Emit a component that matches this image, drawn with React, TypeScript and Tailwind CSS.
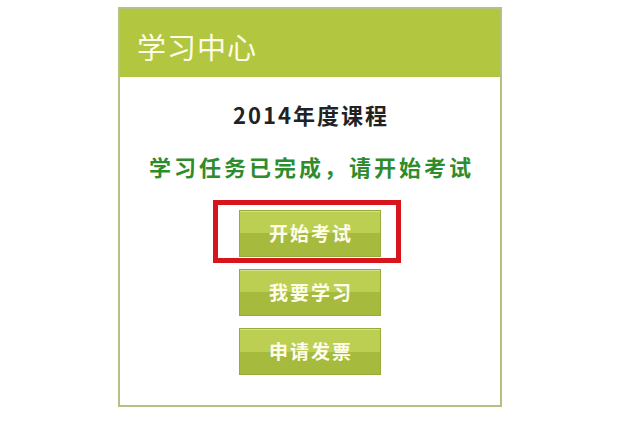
const buttons = ["开始考试", "我要学习", "申请发票"];

export default function App() {
  return (
    <div
      className="w-[620px] h-[429px] bg-white pt-[7px]"
      style={{ fontFamily: '"Noto Sans CJK SC", "Noto Sans", sans-serif' }}
    >
      {/* 面板 */}
      <div className="mx-auto w-[384px] h-[400px] border-2 border-[#b4c084] bg-white flex flex-col">
        <div className="h-[68px] bg-[#b2c640] flex items-center pl-[17px] pt-[6px]">
          <span className="text-[29px] leading-none tracking-[1px] text-[#fbfde8]">学习中心</span>
        </div>
        <div className="flex flex-col items-center pt-[23px]">
          <p className="text-[22px] leading-[28px] font-bold tracking-[2px] text-[#222222] pl-[2px]">
            2014年度课程
          </p>
          <p className="mt-[24px] text-[22px] leading-[28px] font-bold tracking-[3px] text-[#2f8c2c] pl-[3px]">
            学习任务已完成，请开始考试
          </p>
          <div className="mt-[30px] flex flex-col gap-[12px]">
            {buttons.map((label, i) => (
              <div key={label} className="relative">
                {i === 0 && (
                  <div className="absolute -left-[26px] -right-[20px] -top-[10px] -bottom-[6px] border-[5px] border-[#d8141c]" />
                )}
                <button className="relative w-[142px] h-[47px] border border-[#97ab3c] bg-gradient-to-b from-[#bccf52] from-50% to-[#a6bb3d] to-50% text-[#fdfde9] text-[19px] font-bold tracking-[2px] pl-[2px] shadow-[inset_0_1px_0_rgba(255,255,255,0.35)]">
                  {label}
                </button>
              </div>
            ))}
          </div>
        </div>
      </div>
    </div>
  );
}
